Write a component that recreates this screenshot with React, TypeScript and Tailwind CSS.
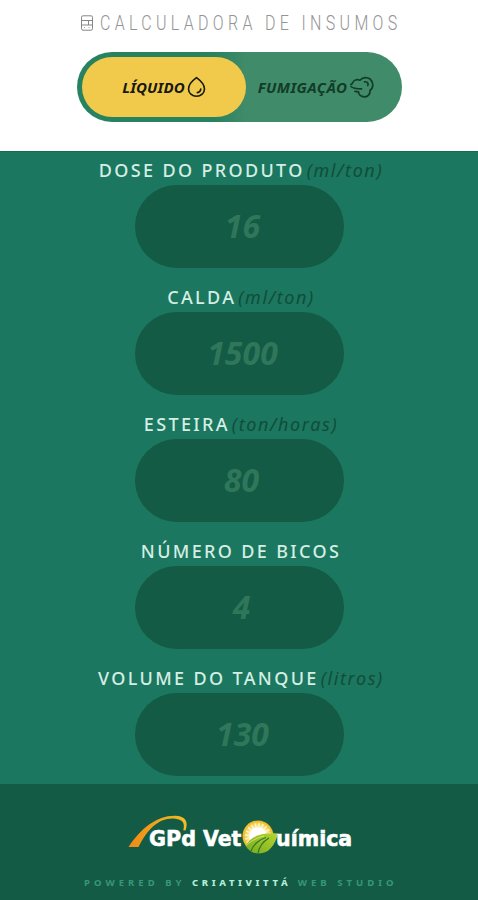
import React from "react";

type Field = {
  label: string;
  unit?: string;
  value: string;
  valueClass: string;
};

const fields: Field[] = [
  { label: "DOSE DO PRODUTO", unit: "(ml/ton)", value: "16", valueClass: "pl-[6px]" },
  { label: "CALDA", unit: "(ml/ton)", value: "1500", valueClass: "pl-[6px]" },
  { label: "ESTEIRA", unit: "(ton/horas)", value: "80", valueClass: "pl-[4px]" },
  { label: "NÚMERO DE BICOS", value: "4", valueClass: "pl-[4px]" },
  { label: "VOLUME DO TANQUE", unit: "(litros)", value: "130", valueClass: "pl-[6px]" },
];

function CalculatorIcon() {
  return (
    <svg width="14" height="16" viewBox="0 0 14 16" fill="none" stroke="#858585" strokeWidth="1">
      <rect x="1.500" y="0.800" width="11" height="14.400" rx="1.500" />
      <path d="M1.500 5.500h11M1.500 10h11M8.500 5.500v4.500" />
      <path d="M4 12.600h1M8.500 12.600h1" strokeWidth="0.800" />
    </svg>
  );
}

function DropIcon() {
  return (
    <svg width="19" height="22" viewBox="0 0 20 22" fill="none" stroke="#17180f" strokeWidth="1.700" strokeLinecap="round" strokeLinejoin="round">
      <path d="M10 1.200C7 3.400 1.600 8.200 1.600 13a8.400 7.800 0 0 0 16.800 0C18.400 8.200 13 3.400 10 1.200Z" />
      <path d="M14.500 13.200a4.300 4.300 0 0 1-3.600 3.700" />
    </svg>
  );
}

function SmokeIcon() {
  return (
    <svg width="24" height="22" viewBox="0 0 24 22" fill="none" stroke="#123c29" strokeWidth="1.700" strokeLinecap="round" strokeLinejoin="round">
      <path d="M.8 8.300C3 8.500 2.500 4.500 5.500 4C8 3 9 4 10 4.200C12.500 1 17 .8 20 3C24 6.500 23.500 12 20 14.300C20.500 18.500 17.500 21 14.500 20.800C11 20.700 8.500 18.500 8.500 15.800L5 15.300" />
      <path d="M1 10.500C3 12.500 5 12.800 11.500 12.800M14.500 5.800C17.500 5.500 18.500 7.500 17.800 9.500" />
    </svg>
  );
}

function SunLeaf() {
  return (
    <svg width="37" height="35" viewBox="0 0 37 35" fill="none">
      <defs>
        <radialGradient id="sun" cx="50%" cy="50%" r="50%">
          <stop offset="0.450" stopColor="#fff" />
          <stop offset="0.700" stopColor="#f9dc74" />
          <stop offset="1" stopColor="#edb51f" />
        </radialGradient>
        <linearGradient id="leaf" x1="0" y1="1" x2="1" y2="0">
          <stop stopColor="#74ab1c" />
          <stop offset="1" stopColor="#b8d531" />
        </linearGradient>
      </defs>
      <circle cx="16" cy="16" r="15.500" fill="url(#sun)" />
      <circle cx="16" cy="16" r="10.500" stroke="#fff6d0" strokeWidth="5" strokeDasharray="1.300 2" />
      <circle cx="16" cy="16" r="8.500" fill="#fff" />
      <path d="M3.500 25.500C9 17 18 12 36 13.500C33 25 27 33.500 17 33.500C11 33.500 6.500 31 3.500 25.500Z" fill="url(#leaf)" />
      <path d="M9 31C11 25 17 19.500 24 17.500M16 33.500C17 27 20 22 27 18" stroke="#2f7a2c" strokeWidth="1.300" />
      <path d="M4 25.500C10 20 16 17.500 22 16" stroke="#dceb76" strokeWidth="0.800" />
    </svg>
  );
}

function Logo() {
  return (
    <div className="relative ml-[126px] mt-[29px] h-[44px] w-[226px] font-['DejaVu_Sans',sans-serif] text-[22px] leading-[30px] font-bold text-white [-webkit-text-stroke:0.600px_white]">
      <svg className="absolute left-[1px] top-0" width="64" height="36" viewBox="0 0 64 36">
        <defs>
          <linearGradient id="arc" x1="0" x2="1">
            <stop stopColor="#f08a18" />
            <stop offset="1" stopColor="#f2bd24" />
          </linearGradient>
        </defs>
        <path d="M1.500 34C14 15 30 2.500 48 2.700C59 3 61.500 9 58.500 17.500L56.300 17.200C58 10.500 56.500 6.200 46.500 5.500C31 5 20 17 11.500 34Z" fill="url(#arc)" />
      </svg>
      <span className="absolute left-[23px] top-[11px] origin-left scale-x-[.94] whitespace-nowrap">GPd</span>
      <span className="absolute left-[77px] top-[11px] origin-left scale-x-[.93] whitespace-nowrap">Vet</span>
      <span className="absolute left-[116px] top-[7px]"><SunLeaf /></span>
      <span className="absolute left-[150px] top-[11px] origin-left scale-x-[.935] whitespace-nowrap">uímica</span>
    </div>
  );
}

export default function App() {
  return (
    <main className="h-[900px] w-full max-w-[478px] overflow-hidden bg-[#1b775f] font-['Noto_Sans','Open_Sans',sans-serif]">
      <header className="h-[151px] bg-white pt-[10px]">
        <h1 className="ml-[80px] flex h-[26px] items-center gap-[6px] text-[#949494]">
          <CalculatorIcon />
          <span className="origin-left scale-x-[.8] whitespace-nowrap font-['Roboto',sans-serif] text-[20px] leading-[26px] font-light tracking-[5.400px]">CALCULADORA DE INSUMOS</span>
        </h1>
        <div className="mt-[16px] ml-[77px] flex h-[70px] w-[325px] rounded-full bg-linear-to-r from-[#27825f] from-[42%] to-[#408b6a] to-[52%] p-[5px] text-[15px] font-bold italic">
          <button className="flex h-[60px] w-[164px] items-center justify-center gap-[2px] rounded-full bg-[#f1ca4b] text-[#17180f]">
            <span className="tracking-[0.100px]">LÍQUIDO</span>
            <DropIcon />
          </button>
          <button className="flex flex-1 items-center justify-center gap-[3px] pr-[11px] text-[#123c29]">
            <span className="tracking-[0.400px]">FUMIGAÇÃO</span>
            <SmokeIcon />
          </button>
        </div>
      </header>
      <section className="h-[633px] border-t border-[#146a50] pt-[6px]">
        {fields.map((field) => (
          <div key={field.label} className="flex h-[127px] flex-col items-center">
            <label className="flex h-[27px] items-start gap-[2px] pl-[4px] whitespace-nowrap text-[18px] leading-[24px] text-[#d5eee3]">
              <span className="font-medium tracking-[2.350px]">{field.label}</span>
              {field.unit && <span className="tracking-[1.600px] text-[#124d3a] italic">{field.unit}</span>}
            </label>
            <div className={"ml-[1px] flex h-[83px] w-[209px] items-center justify-center rounded-full bg-[#135b45] pb-[2px] text-[32px] font-bold italic text-[#30765b] " + field.valueClass}>
              {field.value}
            </div>
          </div>
        ))}
      </section>
      <footer className="h-[116px] overflow-hidden bg-[#135b45]">
        <Logo />
        <p className="mt-[19px] ml-[84px] whitespace-nowrap text-[9.500px] leading-[14px] font-bold tracking-[4.050px] text-[#37977a]">
          POWERED BY <strong className="font-extrabold tracking-[3.600px] text-[#b4eed7]">CRIATIVITTÁ</strong> WEB STUDIO
        </p>
      </footer>
    </main>
  );
}
